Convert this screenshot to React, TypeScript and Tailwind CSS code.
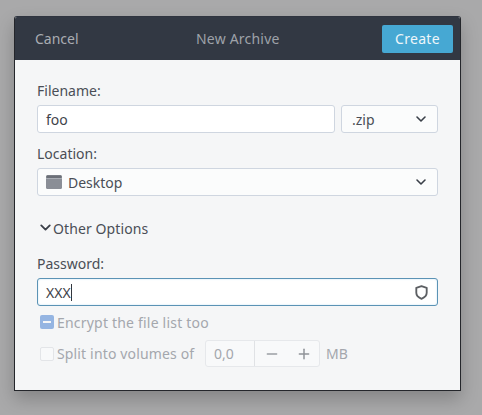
import { ChevronDown, Minus, Plus } from "lucide-react";

function Chevron() {
  return <ChevronDown className="h-[16px] w-[16px] text-[#3a3f48]" strokeWidth={2.4} />;
}

function ShieldIcon() {
  return (
    <svg width="13" height="15" viewBox="0 0 14 16" fill="none">
      <path
        d="M7 1.2 12.6 3v5.4c0 3-2.4 5.2-5.6 6.4-3.2-1.2-5.6-3.4-5.6-6.4V3L7 1.2Z"
        stroke="#5c5f63"
        strokeWidth="2"
        strokeLinejoin="round"
      />
    </svg>
  );
}

function FolderIcon() {
  return (
    <svg width="16" height="15" viewBox="0 0 16 15">
      <rect x="0" y="0" width="16" height="14" rx="1.5" fill="#8a8e96" />
      <rect x="0.5" y="0.5" width="15" height="2.5" rx="1" fill="#6b6f77" />
      <rect x="0" y="3" width="16" height="1" fill="#a9adb4" />
    </svg>
  );
}

export default function App() {
  return (
    <div className="flex h-[415px] w-[482px] items-start overflow-hidden bg-[#a9a9aa] pl-[14px] pt-4 font-['Noto_Sans',sans-serif] text-[14px] text-[#4a4e56]">
      <div className="h-[375px] w-[447px] overflow-hidden rounded-t-[3px] border border-[#24262b] border-t-[#2f343f] bg-[#f5f6f7] shadow-[0_8px_18px_rgba(0,0,0,0.22)]">
        <header className="flex h-[43px] items-center justify-between bg-[#323843] pl-[20px] pr-[7px]">
          <span className="text-[#a9acb2]">Cancel</span>
          <span className="ml-[15px] tracking-[0.2px] text-[#9ea2a9]">New Archive</span>
          <button className="flex h-[28px] w-[71px] items-center justify-center rounded-[2px] bg-[#46a8d3] tracking-[0.3px] text-[#eef6fa]">
            Create
          </button>
        </header>

        <main className="px-[22px] pt-[21px]">
          <label className="block h-[20px] leading-[20px]">Filename:</label>
          <div className="mt-[4px] flex gap-[6px]">
            <div className="flex h-[28px] flex-1 items-center rounded-[3px] border border-[#cfd6e0] bg-white px-[8px] text-[#3f434b]">
              foo
            </div>
            <div className="flex h-[28px] w-[97px] items-center justify-between rounded-[3px] border border-[#cfd6e0] bg-[#fbfcfc] pl-[10px] pr-[8px]">
              .zip
              <Chevron />
            </div>
          </div>

          <label className="mt-[11px] block h-[20px] leading-[20px]">Location:</label>
          <div className="mt-[4px] flex h-[28px] items-center justify-between rounded-[3px] border border-[#cfd6e0] bg-[#fbfcfc] pl-[8px] pr-[8px]">
            <span className="flex items-center gap-[6px]">
              <FolderIcon />
              Desktop
            </span>
            <Chevron />
          </div>

          <div className="mt-[23px] flex h-[20px] items-center leading-[20px] tracking-[0.1px]">
            <ChevronDown className="-mt-[3px] mr-[-1px] h-[17px] w-[17px] text-[#3a3f48]" strokeWidth={2.6} />
            Other Options
          </div>

          <label className="mt-[15px] block h-[20px] leading-[20px]">Password:</label>
          <div className="mt-[4px] flex h-[28px] items-center justify-between rounded-[3px] border border-[#5b93b5] bg-white pl-[8px] pr-[9px] shadow-[inset_0_0_2px_rgba(80,170,220,0.35)]">
            <span className="flex items-center text-[#3f434b]">
              XXX
              <span className="h-[17px] w-px bg-[#33373e]" />
            </span>
            <ShieldIcon />
          </div>

          <div className="ml-[3px] mt-[6px] flex h-[20px] items-center gap-[3px] tracking-[0.2px] text-[#a4a7ad]">
            <span className="flex h-[14px] w-[14px] items-center justify-center rounded-[2px] bg-[#95b5e2]">
              <span className="h-[2px] w-[8px] bg-[#f5f6f7]" />
            </span>
            Encrypt the file list too
          </div>

          <div className="ml-[3px] mt-[8px] flex h-[27px] items-center text-[#a4a7ad]">
            <span className="h-[14px] w-[14px] rounded-[2px] border border-[#e3e5e8] bg-[#f8f9fa]" />
            <span className="ml-[3px] w-[137px] whitespace-nowrap tracking-[0.15px]">Split into volumes of</span>
            <div className="ml-[11px] flex h-[27px] w-[115px] rounded-[3px] border border-[#e6e8eb] bg-[#f8f9fa]">
              <span className="flex w-[49px] items-center border-r border-[#e0e2e5] pl-[8px]">0,0</span>
              <span className="flex w-[33px] items-center justify-center">
                <Minus className="h-[16px] w-[16px] text-[#9b9ea4]" strokeWidth={2.2} />
              </span>
              <span className="flex w-[31px] items-center justify-center">
                <Plus className="h-[16px] w-[16px] text-[#8f9298]" strokeWidth={2.2} />
              </span>
            </div>
            <span className="ml-[6px]">MB</span>
          </div>
        </main>
      </div>
    </div>
  );
}
